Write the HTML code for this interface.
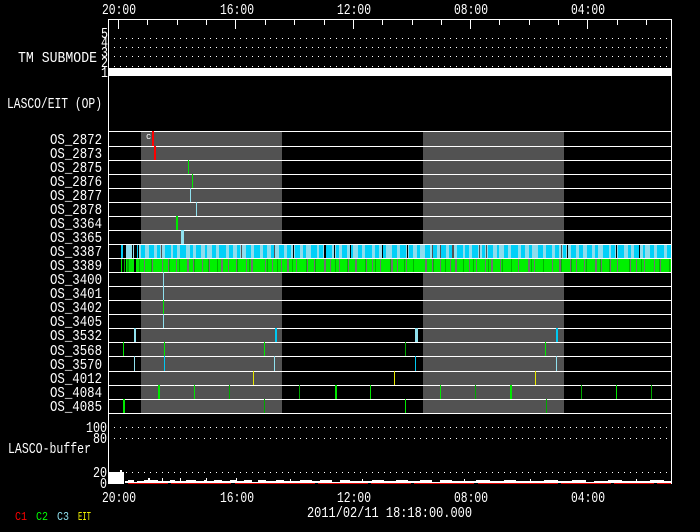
<!DOCTYPE html>
<html>
<head>
<meta charset="utf-8">
<style>
html,body{margin:0;padding:0;background:#000;width:700px;height:532px;overflow:hidden}
svg{display:block}
text{font-family:"Liberation Mono",monospace;font-size:15px;fill:#fff}
</style>
</head>
<body>
<svg width="700" height="532" viewBox="0 0 700 532" xmlns="http://www.w3.org/2000/svg">
<rect width="700" height="532" fill="#000"/>
<g shape-rendering="crispEdges">
<rect x="141" y="131" width="141" height="282" fill="#525252"/>
<rect x="423" y="131" width="141" height="282" fill="#525252"/>
<rect x="109" y="68" width="562" height="8" fill="#fff"/>
<g stroke="#fff" stroke-width="1" stroke-dasharray="1 5" fill="none">
<path d="M114 38.5H668M114 47.5H668M114 56.5H668M114 66.5H668M114 427.5H668M114 438.5H668M114 472.5H668"/>
</g>
<!-- 3387 band -->
<g fill="#8fdcec">
<rect x="121" y="245" width="2" height="13" fill="#00d0f8"/>
<rect x="126" y="245" width="6" height="13"/>
<rect x="133" y="245" width="1" height="13"/>
<rect x="137" y="245" width="1" height="13" fill="#00d0f8"/>
</g>
<g fill="none">
<path d="M139 251.5H671" stroke="#8fdcec" stroke-width="13" stroke-dasharray="12 1 9 1 14 1 7 1 11 2 8 1 16 1 6 1 10 1 13 2 9 1 7 1 18 1 11 1 5 1 12 2 8 1 15 1 9 1 6 1 14 2 10 1"/>
<path d="M141 251.5H671" stroke="#00d0f8" stroke-width="13" stroke-dasharray="4 4 5 3 3 5 6 2 4 3 6 4 3 3 5 4 2 5 4 3 7 3 4 4 3 6 5 3 6 3 4 4 3 5 5 3"/>
</g>
<!-- 3389 band -->
<g fill="#00e800">
<rect x="121" y="259" width="1" height="13"/>
<rect x="124" y="259" width="1" height="13" fill="#00a800"/>
<rect x="126" y="259" width="1" height="13"/>
<rect x="129" y="259" width="5" height="13"/>
<rect x="127" y="259" width="2" height="13" fill="#00a800"/>
</g>
<g fill="none">
<path d="M136 265.5H671" stroke="#707070" stroke-width="13"/>
<path d="M136 265.5H671" stroke="#00f000" stroke-width="13" stroke-dasharray="8 1 6 2 9 1 5 1 7 1 10 2 4 1 8 1 6 1 11 2 5 1 7 1 9 1 4 2 12 1 6 1 8 1 5 2 7 1 10 1 6 1 9 2 4 1 8 1"/>
<path d="M139 265.5H671" stroke="#00b400" stroke-width="13" stroke-dasharray="1 11 1 17 1 9 1 14 1 13 1 8 1 19"/>
</g>
<!-- row lines -->
<path d="M109 131.5H671M109 146.5H671M109 160.5H671M109 174.5H671M109 188.5H671M109 202.5H671M109 216.5H671M109 230.5H671M109 244.5H671M109 258.5H671M109 272.5H671M109 286.5H671M109 300.5H671M109 314.5H671M109 328.5H671M109 342.5H671M109 356.5H671M109 371.5H671M109 385.5H671M109 399.5H671M109 413.5H671" stroke="#fff" stroke-width="1" fill="none"/>
<!-- frame -->
<path d="M108.5 19V484M671.5 19V484M108 19.5H672" stroke="#fff" fill="none"/>
<!-- ticks -->
<path d="M118.5 19V29M235.5 19V29M353.5 19V29M470.5 19V29M587.5 19V29" stroke="#fff" fill="none"/>
<path d="M147.5 19V25M177.5 19V25M206.5 19V25M265.5 19V25M294.5 19V25M324.5 19V25M382.5 19V25M412.5 19V25M441.5 19V25M499.5 19V25M529.5 19V25M558.5 19V25M617.5 19V25M646.5 19V25" stroke="#fff" fill="none"/>
<!-- markers red -->
<rect x="152" y="131" width="2" height="15" fill="#f00"/>
<rect x="154" y="146" width="2" height="14" fill="#f00"/>
<!-- bright green -->
<g fill="#00e800">
<rect x="188" y="160" width="1" height="14"/>
<rect x="192" y="174" width="1" height="14"/>
<rect x="176" y="216" width="2" height="14"/>
<rect x="163" y="300" width="1" height="14"/>
<rect x="123" y="342" width="1" height="14"/>
<rect x="164" y="342" width="1" height="14"/>
<rect x="264" y="342" width="1" height="14"/>
<rect x="545" y="342" width="1" height="14"/>
<rect x="158" y="385" width="2" height="14"/>
<rect x="194" y="385" width="1" height="14"/>
<rect x="335" y="385" width="2" height="14"/>
<rect x="370" y="385" width="1" height="14"/>
<rect x="440" y="385" width="1" height="14"/>
<rect x="510" y="385" width="2" height="14"/>
<rect x="616" y="385" width="1" height="14"/>
<rect x="123" y="399" width="2" height="14"/>
<rect x="405" y="399" width="1" height="14"/>
</g>
<!-- dim green -->
<g fill="#00a800">
<rect x="405" y="342" width="1" height="14"/>
<rect x="229" y="385" width="1" height="14"/>
<rect x="299" y="385" width="1" height="14"/>
<rect x="475" y="385" width="1" height="14"/>
<rect x="581" y="385" width="1" height="14"/>
<rect x="651" y="385" width="1" height="14"/>
<rect x="264" y="399" width="1" height="14"/>
<rect x="546" y="399" width="1" height="14"/>
</g>
<!-- light cyan -->
<g fill="#8fe0ee">
<rect x="190" y="188" width="1" height="14"/>
<rect x="196" y="202" width="1" height="14"/>
<rect x="181" y="230" width="3" height="14"/>
<rect x="163" y="272" width="1" height="14"/>
<rect x="163" y="286" width="1" height="14"/>
<rect x="163" y="314" width="1" height="14"/>
<rect x="134" y="328" width="2" height="14"/>
<rect x="415" y="328" width="3" height="14"/>
<rect x="134" y="356" width="1" height="15"/>
<rect x="274" y="356" width="1" height="15"/>
<rect x="556" y="356" width="1" height="15"/>
</g>
<!-- cyan -->
<g fill="#00c8f0">
<rect x="275" y="328" width="2" height="14"/>
<rect x="556" y="328" width="2" height="14"/>
<rect x="164" y="356" width="1" height="15"/>
<rect x="415" y="356" width="1" height="15"/>
</g>
<!-- yellow -->
<g fill="#e8e800">
<rect x="253" y="371" width="1" height="14"/>
<rect x="394" y="371" width="1" height="14"/>
<rect x="535" y="371" width="1" height="14"/>
</g>
<!-- buffer -->
<path d="M109 484V472H120V470H122V472H124V484Z" fill="#fff"/>
<path d="M125 483V481H128V480H134V482H137V481H144V480H148V478H150V480H158V481H162V478H163V481H170V480H175V481H180V478H181V481H186V480H196V481H204V480H206V478H207V481H214V480H222V481H230V480H236V478H237V481H244V480H252V482H258V480H266V481H276V480H284V481H290V479H291V481H300V480H312V481H320V480H332V482H340V480H350V481H362V479H363V481H372V480H384V481H396V480H408V481H420V480H432V482H440V480H452V481H464V479H465V481H476V480H490V481H504V480H516V481H530V479H531V481H544V480H558V481H572V480H586V482H594V481H608V480H622V481H636V479H637V481H650V480H664V481H671V483Z" fill="#fff"/>
<path d="M128 483.5H671" stroke="#e00000" stroke-width="1" stroke-dasharray="40 3 60 4 80 3 50 3" fill="none"/>
</g>

<!-- top axis labels -->
<text x="102" y="14" textLength="34" lengthAdjust="spacingAndGlyphs">20:00</text>
<text x="220" y="14" textLength="34" lengthAdjust="spacingAndGlyphs">16:00</text>
<text x="337" y="14" textLength="34" lengthAdjust="spacingAndGlyphs">12:00</text>
<text x="454" y="14" textLength="34" lengthAdjust="spacingAndGlyphs">08:00</text>
<text x="571" y="14" textLength="34" lengthAdjust="spacingAndGlyphs">04:00</text>
<!-- bottom axis labels -->
<text x="102" y="502" textLength="34" lengthAdjust="spacingAndGlyphs">20:00</text>
<text x="220" y="502" textLength="34" lengthAdjust="spacingAndGlyphs">16:00</text>
<text x="337" y="502" textLength="34" lengthAdjust="spacingAndGlyphs">12:00</text>
<text x="454" y="502" textLength="34" lengthAdjust="spacingAndGlyphs">08:00</text>
<text x="571" y="502" textLength="34" lengthAdjust="spacingAndGlyphs">04:00</text>
<!-- submode y -->
<text x="101" y="38" textLength="7" lengthAdjust="spacingAndGlyphs">5</text>
<text x="101" y="47" textLength="7" lengthAdjust="spacingAndGlyphs">4</text>
<text x="101" y="57" textLength="7" lengthAdjust="spacingAndGlyphs">3</text>
<text x="101" y="67" textLength="7" lengthAdjust="spacingAndGlyphs">2</text>
<text x="101" y="77" textLength="7" lengthAdjust="spacingAndGlyphs">1</text>
<text x="18" y="62" textLength="79" lengthAdjust="spacingAndGlyphs">TM SUBMODE</text>
<text x="7" y="108" textLength="95" lengthAdjust="spacingAndGlyphs">LASCO/EIT (OP)</text>
<!-- rows -->
<g>
<text x="50" y="144" textLength="52" lengthAdjust="spacingAndGlyphs">OS_2872</text>
<text x="50" y="158" textLength="52" lengthAdjust="spacingAndGlyphs">OS_2873</text>
<text x="50" y="172" textLength="52" lengthAdjust="spacingAndGlyphs">OS_2875</text>
<text x="50" y="186" textLength="52" lengthAdjust="spacingAndGlyphs">OS_2876</text>
<text x="50" y="200" textLength="52" lengthAdjust="spacingAndGlyphs">OS_2877</text>
<text x="50" y="214" textLength="52" lengthAdjust="spacingAndGlyphs">OS_2878</text>
<text x="50" y="228" textLength="52" lengthAdjust="spacingAndGlyphs">OS_3364</text>
<text x="50" y="242" textLength="52" lengthAdjust="spacingAndGlyphs">OS_3365</text>
<text x="50" y="256" textLength="52" lengthAdjust="spacingAndGlyphs">OS_3387</text>
<text x="50" y="270" textLength="52" lengthAdjust="spacingAndGlyphs">OS_3389</text>
<text x="50" y="284" textLength="52" lengthAdjust="spacingAndGlyphs">OS_3400</text>
<text x="50" y="298" textLength="52" lengthAdjust="spacingAndGlyphs">OS_3401</text>
<text x="50" y="312" textLength="52" lengthAdjust="spacingAndGlyphs">OS_3402</text>
<text x="50" y="326" textLength="52" lengthAdjust="spacingAndGlyphs">OS_3405</text>
<text x="50" y="340" textLength="52" lengthAdjust="spacingAndGlyphs">OS_3532</text>
<text x="50" y="355" textLength="52" lengthAdjust="spacingAndGlyphs">OS_3568</text>
<text x="50" y="369" textLength="52" lengthAdjust="spacingAndGlyphs">OS_3570</text>
<text x="50" y="383" textLength="52" lengthAdjust="spacingAndGlyphs">OS_4012</text>
<text x="50" y="397" textLength="52" lengthAdjust="spacingAndGlyphs">OS_4084</text>
<text x="50" y="411" textLength="52" lengthAdjust="spacingAndGlyphs">OS_4085</text>
</g>
<text x="146" y="139" style="font-size:9px">c</text>
<!-- buffer axis -->
<text x="86" y="432" textLength="21" lengthAdjust="spacingAndGlyphs">100</text>
<text x="93" y="443" textLength="14" lengthAdjust="spacingAndGlyphs">80</text>
<text x="93" y="477" textLength="14" lengthAdjust="spacingAndGlyphs">20</text>
<text x="100" y="488" textLength="7" lengthAdjust="spacingAndGlyphs">0</text>
<text x="8" y="453" textLength="83" lengthAdjust="spacingAndGlyphs">LASCO-buffer</text>
<!-- footer -->
<text x="307" y="517" textLength="165" lengthAdjust="spacingAndGlyphs">2011/02/11 18:18:00.000</text>
<text x="15" y="520" textLength="12" lengthAdjust="spacingAndGlyphs" style="fill:#f00;font-size:12px">C1</text>
<text x="36" y="520" textLength="12" lengthAdjust="spacingAndGlyphs" style="fill:#0f0;font-size:12px">C2</text>
<text x="57" y="520" textLength="12" lengthAdjust="spacingAndGlyphs" style="fill:#8fe0ee;font-size:12px">C3</text>
<text x="78" y="520" textLength="13" lengthAdjust="spacingAndGlyphs" style="fill:#ff0;font-size:12px">EIT</text>
</svg>
</body>
</html>
